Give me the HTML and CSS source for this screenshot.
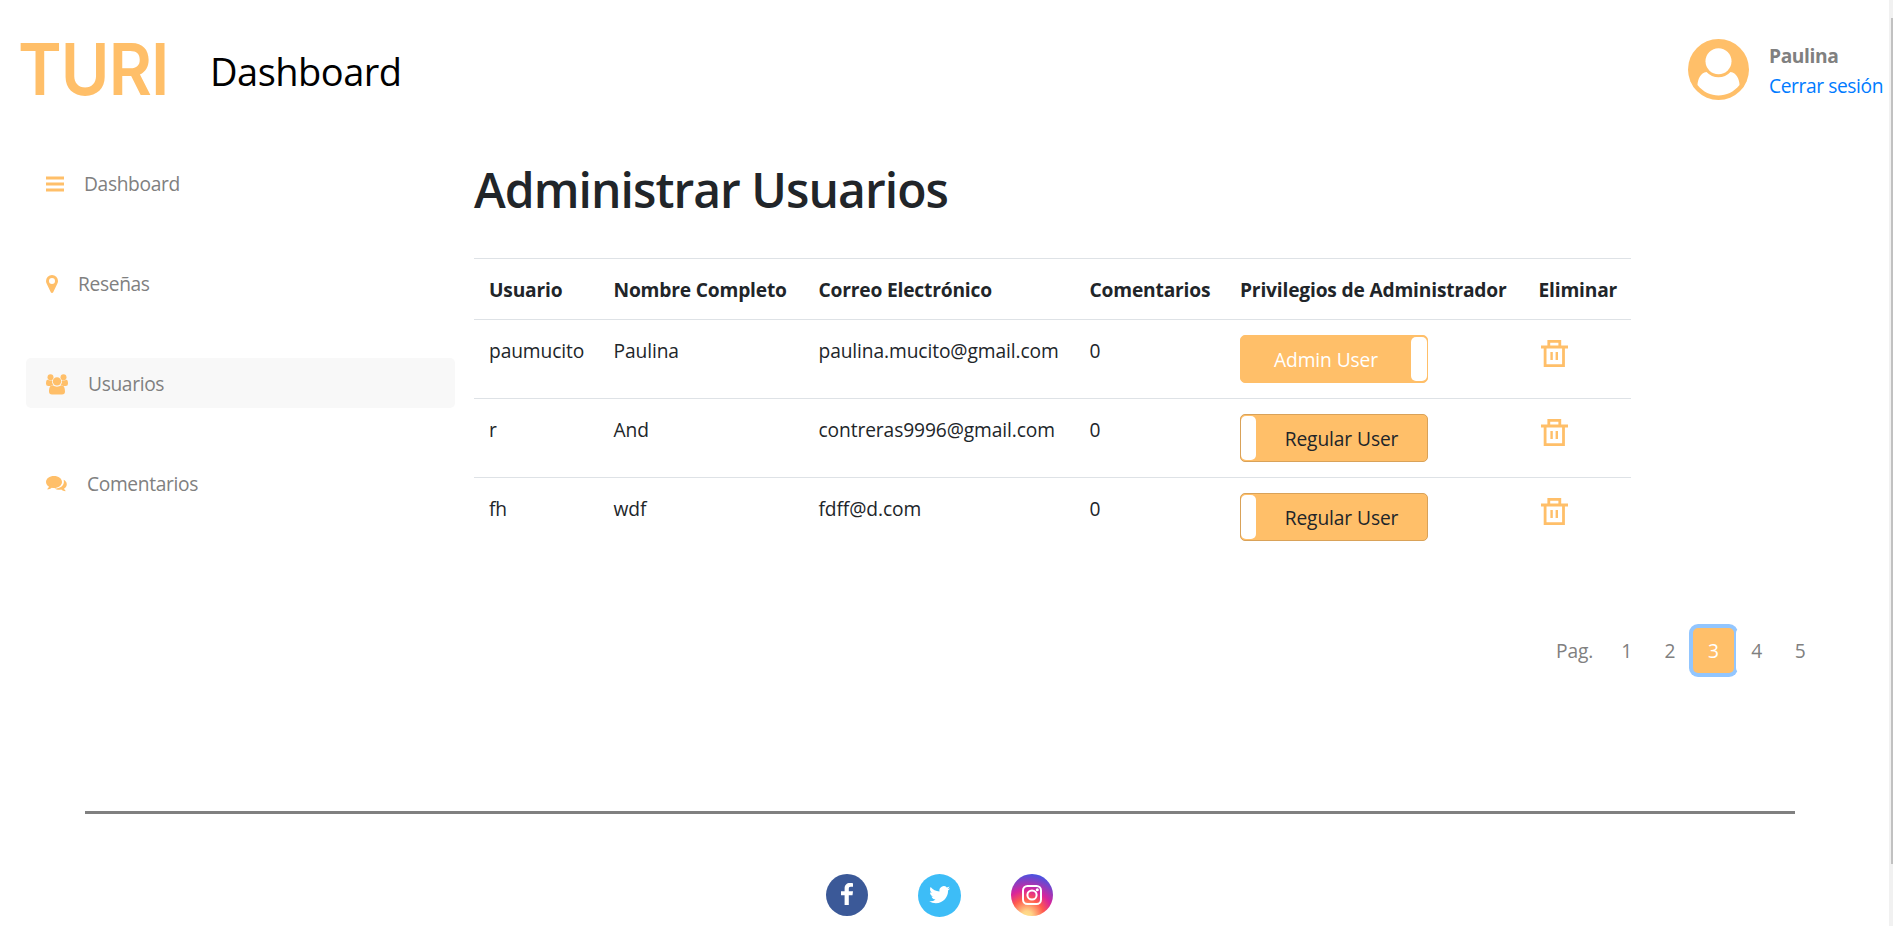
FILE: index.html
```html
<!DOCTYPE html>
<html lang="es">
<head>
<meta charset="utf-8">
<title>Turi - Administrar Usuarios</title>
<link rel="stylesheet" href="styles.css">
</head>
<body>
<svg class="sprite" aria-hidden="true">
  <symbol id="trash" viewBox="0 0 27 27">
    <path d="M0 7h27M7.800 7V1.400h11V7M4.100 7v18.600h18.400V7" fill="none" stroke="currentColor" stroke-width="2.800"/>
    <path d="M10.600 12v8M15.800 12v8" stroke="currentColor" stroke-width="2.400"/>
  </symbol>
</svg>
<header class="top">
  <div class="logo">TURI</div>
  <div class="section">Dashboard</div>
  <div class="account">
    <svg class="avatar" viewBox="0 0 61 61"><circle cx="30.500" cy="30.500" r="30.500" fill="#ffbf69"/><circle cx="30.500" cy="22.200" r="13" fill="#fff"/><path d="M18.500 33Q23.500 38.300 30.500 38.300T42.500 33C48.500 33.500 51.500 41 51.500 46C46 53 38 56.500 30.500 56.500S15 53 9.500 46C9.500 41 12.500 33.500 18.500 33Z" fill="#fff"/></svg>
    <div class="who"><b>Paulina</b><a>Cerrar sesión</a></div>
  </div>
</header>
<div class="body">
  <nav class="side">
    <a class="link"><svg width="18" height="18" viewBox="0 0 18 18"><path d="M0 3h18M0 9h18M0 15h18" stroke="currentColor" stroke-width="2.800"/></svg><span>Dashboard</span></a>
    <a class="link"><svg width="12" height="18" viewBox="0 0 12 18"><path fill="currentColor" fill-rule="evenodd" d="M6 0a6 6 0 0 1 6 6c0 1-.2 1.800-.6 2.600L7.200 17.200a1.300 1.300 0 0 1-2.400 0L.6 8.600C.2 7.800 0 7 0 6a6 6 0 0 1 6-6Zm0 3a3 3 0 1 0 0 6 3 3 0 0 0 0-6Z"/></svg><span>Reseñas</span></a>
    <a class="link active"><svg width="22" height="21" viewBox="0 0 22 21"><g fill="currentColor"><circle cx="4.500" cy="3.200" r="3"/><circle cx="17.500" cy="3.200" r="3"/><circle cx="11" cy="7.400" r="4.200"/><path d="M1.600 5.800Q4 7.200 6 6.200Q5.600 9 7.400 10.800Q5.800 10.800 4.600 12H2.300Q0 12 0 9.800Q0 5.900 1.600 5.800ZM20.400 5.800Q18 7.200 16 6.200Q16.400 9 14.600 10.800Q16.200 10.800 17.400 12H19.700Q22 12 22 9.800Q22 5.900 20.400 5.800Z"/><path d="M6.600 11.300Q11 14.200 15.400 11.300C18 11.300 19 14 19 17.500Q19 20.500 16 20.500H6Q3 20.500 3 17.500C3 14 4 11.300 6.600 11.300Z"/></g></svg><span>Usuarios</span></a>
    <a class="link"><svg width="21" height="16" viewBox="0 0 21 16"><g fill="currentColor"><path d="M8 0c4.500 0 8 2.600 8 6s-3.500 6-8 6c-.8 0-1.500 0-2.200-.2-1.300 1-2.800 1.500-4.300 1.600l-.2-.5c1-.8 1.500-1.500 1.600-2.300C1.100 9.500 0 7.900 0 6c0-3.400 3.500-6 8-6Z"/><path d="M17.600 3.800c2 1 3.200 2.600 3.200 4.400 0 1.700-1 3.300-2.700 4.300.1.800.8 1.600 1.500 2.200l-.2.600c-1.500-.1-3-.7-4.200-1.700-2.300.5-4.900.1-6.800-1 5.500.1 9.500-2.800 9.500-6.600 0-.8-.1-1.500-.3-2.200Z"/></g></svg><span>Comentarios</span></a>
  </nav>
  <main class="content">
    <h1>Administrar Usuarios</h1>
    <table class="users">
      <colgroup><col class="c1"><col class="c2"><col class="c3"><col class="c4"><col class="c5"><col class="c6"></colgroup>
      <thead><tr><th>Usuario</th><th>Nombre Completo</th><th>Correo Electrónico</th><th>Comentarios</th><th>Privilegios de Administrador</th><th>Eliminar</th></tr></thead>
      <tbody>
        <tr><td>paumucito</td><td>Paulina</td><td>paulina.mucito@gmail.com</td><td>0</td><td class="control"><div class="toggle on"><span>Admin User</span><i></i></div></td><td class="control"><svg class="trash"><use href="#trash"/></svg></td></tr>
        <tr><td>r</td><td>And</td><td>contreras9996@gmail.com</td><td>0</td><td class="control"><div class="toggle"><i></i><span>Regular User</span></div></td><td class="control"><svg class="trash"><use href="#trash"/></svg></td></tr>
        <tr><td>fh</td><td>wdf</td><td>fdff@d.com</td><td>0</td><td class="control"><div class="toggle"><i></i><span>Regular User</span></div></td><td class="control"><svg class="trash"><use href="#trash"/></svg></td></tr>
      </tbody>
    </table>
    <div class="pages"><span class="label">Pag.</span><a>1</a><a>2</a><a class="current">3</a><a>4</a><a>5</a></div>
  </main>
</div>
<footer class="foot">
  <svg width="42" height="42" viewBox="0 0 42 42"><circle cx="21" cy="21" r="21" fill="#3b5998"/><path fill="#fff" d="M27 9.200v3.600h-2.200c-1.700 0-2 .8-2 2v2.500H27l-.5 4h-3.700V31h-4.200v-9.700H15v-4h3.600v-3c0-3.500 2.200-5.400 5.300-5.400 1.400 0 2.700.2 3.100.3Z"/></svg>
  <svg width="43" height="43" viewBox="0 0 43 43"><circle cx="21.500" cy="21.500" r="21.500" fill="#3dbdf7"/><path transform="translate(11.200 10.200) scale(.875)" fill="#fff" d="M23.950 4.570a10 10 0 0 1-2.820.77 4.960 4.960 0 0 0 2.160-2.720c-.95.550-2 .950-3.130 1.180a4.920 4.920 0 0 0-8.380 4.480C7.690 8.090 4.070 6.130 1.640 3.160a4.820 4.820 0 0 0-.67 2.480c0 1.710.87 3.210 2.190 4.100a4.900 4.900 0 0 1-2.230-.62v.06a4.920 4.920 0 0 0 3.950 4.830 5 5 0 0 1-2.210.08 4.940 4.940 0 0 0 4.600 3.420A9.870 9.870 0 0 1 0 19.540a14 14 0 0 0 7.550 2.210c9.050 0 14-7.500 14-13.980 0-.21 0-.42-.02-.63a9.900 9.900 0 0 0 2.420-2.570Z"/></svg>
  <svg width="42" height="42" viewBox="0 0 42 42"><defs><radialGradient id="ig" cx=".38" cy="1" r="1"><stop offset="0" stop-color="#ffe08a"/><stop offset=".12" stop-color="#ffd387"/><stop offset=".4" stop-color="#ff5b4d"/><stop offset=".62" stop-color="#d9249a"/><stop offset="1" stop-color="#4a52e0"/></radialGradient></defs><circle cx="21" cy="21" r="21" fill="url(#ig)"/><g fill="none" stroke="#fff" stroke-width="2"><rect x="12" y="12" width="18" height="18" rx="4.500"/><circle cx="21" cy="21" r="4.600"/></g><circle cx="26.300" cy="15.700" r="1.500" fill="#fff"/></svg>
</footer>
<div class="scroll"></div>
</body>
</html>
```
FILE: styles.css
```css
* { box-sizing: border-box; }
body { margin: 0; height: 926px; overflow: hidden; background: #fff; color: #212529; font: 19.200px/30px "Open Sans", "Noto Sans", sans-serif; letter-spacing: -.1px; position: relative; }
.sprite { display: none; }
.top { display: flex; height: 140px; padding: 39px 9px 0 18px; }
.logo { width: 192px; color: #ffbf69; font: 600 72px/60px Inter, sans-serif; letter-spacing: -1px; transform: scaleX(.92); transform-origin: left; }
.section { color: #000; font-size: 38px; line-height: 64px; letter-spacing: -.5px; }
.account { margin-left: auto; display: flex; gap: 20px; }
.avatar { width: 61px; height: 61px; }
.who { display: flex; flex-direction: column; width: 115px; padding-top: 2px; color: #808080; white-space: nowrap; letter-spacing: -.400px; }
.who a { color: #007bff; }
.body { display: flex; height: 671px; }
.side { width: 474px; padding: 18px 19px 0 26px; display: flex; flex-direction: column; gap: 50px; letter-spacing: -.350px; }
.link { height: 50px; padding: 2px 0 0 20px; border-radius: 5px; display: flex; align-items: center; gap: 20px; color: #808080; }
.link svg { color: #ffbf69; }
.active { background: #f8f8f8; }
.content { width: 1400px; }
h1 { margin: 20px 0 38px; font-size: 48px; font-weight: 600; line-height: 60px; letter-spacing: -.950px; }
.users { table-layout: fixed; width: 1157px; border-collapse: collapse; white-space: nowrap; }
.c1 { width: 124.500px; } .c2 { width: 205px; } .c3 { width: 271px; } .c4 { width: 150.500px; } .c5 { width: 298.500px; } .c6 { width: 107.500px; }
.users th, .users td { padding: 16px 15px 14px; border-top: 1px solid #dee2e6; text-align: left; vertical-align: top; font-weight: 400; }
.users th { font-weight: 700; letter-spacing: -.180px; }
.users .control { padding: 15px; }
.toggle { display: flex; width: 188px; height: 48px; padding: 1px 0; border: 1px solid #d9a259; border-radius: 5px; background: #ffbf69; }
.toggle i { width: 15px; border-radius: 5px; background: #fff; }
.toggle span { flex: 1; text-align: center; line-height: 46px; }
.toggle.on { border-color: #ffbf69; color: #fff; }
.toggle.on i { width: 16px; }
.trash { display: block; width: 27px; height: 27px; margin: 5px 0 0 2px; color: #ffbf69; }
.pages { display: flex; gap: 2.400px; margin: 72px 0 0 1067px; color: #808080; }
.pages .label { width: 62.700px; padding: 10px 0 10px 15px; line-height: 25px; }
.pages a { width: 41px; height: 45px; line-height: 45px; text-align: center; border-radius: 5px; background: #fff; position: relative; }
.pages .current { background: #ffbf69; color: #fff; box-shadow: 0 0 0 4px #92c6ff; }
.foot { width: 1709.500px; margin-left: 85.300px; padding: 60px 2px 0 0; border-top: 3px solid #808080; display: flex; justify-content: center; gap: 50px; }
.scroll { position: absolute; top: 0; right: 0; width: 4px; height: 926px; background: linear-gradient(#c1c1c1, #c1c1c1) 2px 18px / 2px 846px no-repeat #f1f1f1; }
```
